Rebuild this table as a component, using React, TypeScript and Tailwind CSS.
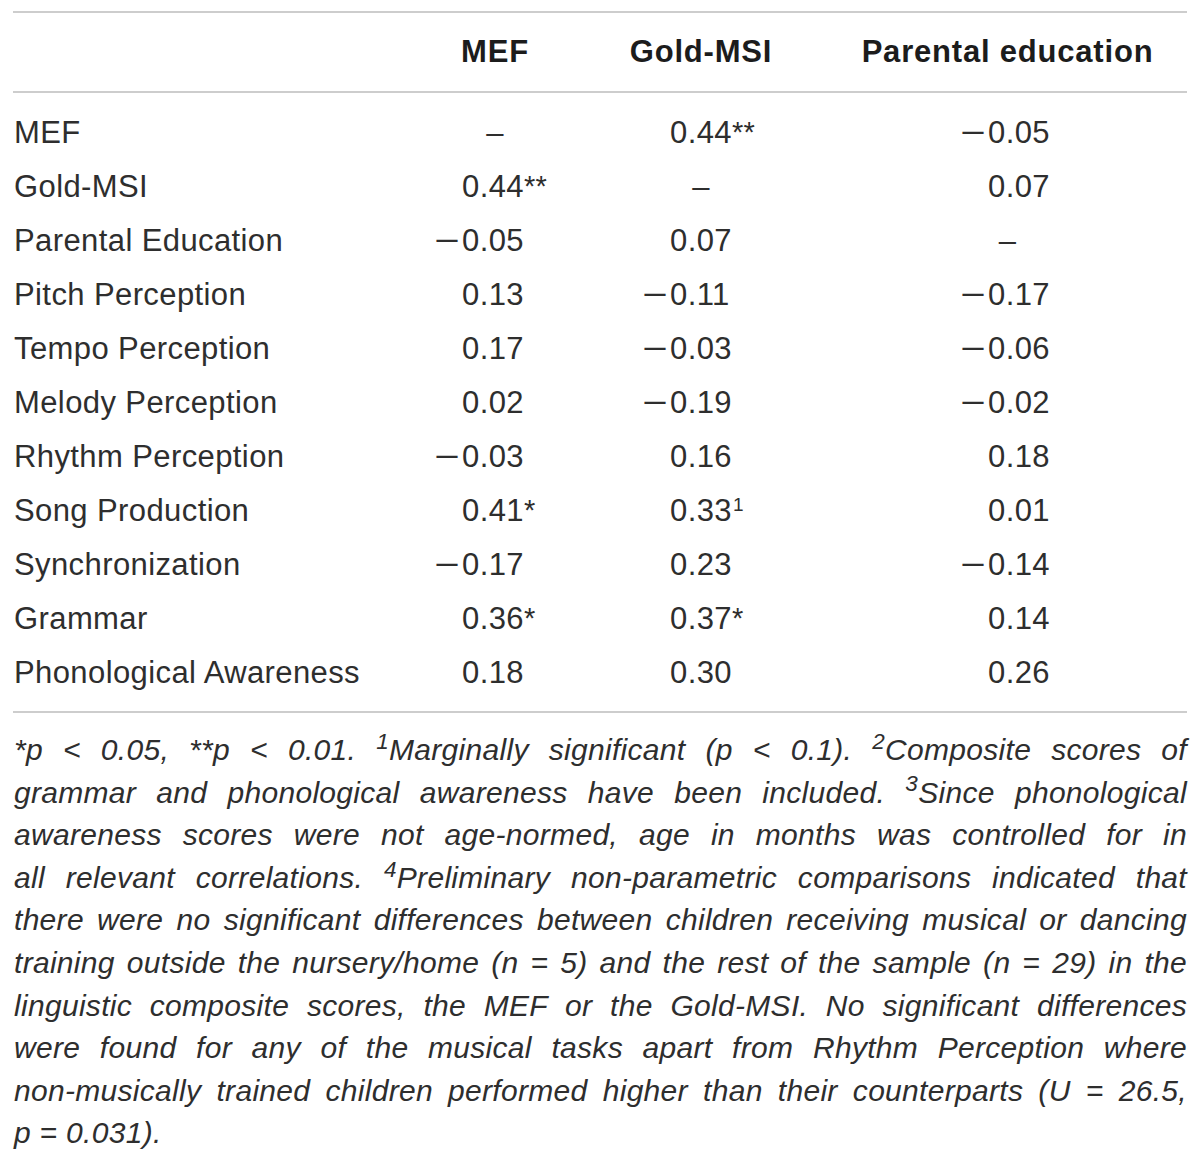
import React from "react";

type Cell = string | null; // null = diagonal dash

const rows: { label: string; v: [Cell, Cell, Cell] }[] = [
  { label: "MEF", v: [null, "0.44**", "-0.05"] },
  { label: "Gold-MSI", v: ["0.44**", null, "0.07"] },
  { label: "Parental Education", v: ["-0.05", "0.07", null] },
  { label: "Pitch Perception", v: ["0.13", "-0.11", "-0.17"] },
  { label: "Tempo Perception", v: ["0.17", "-0.03", "-0.06"] },
  { label: "Melody Perception", v: ["0.02", "-0.19", "-0.02"] },
  { label: "Rhythm Perception", v: ["-0.03", "0.16", "0.18"] },
  { label: "Song Production", v: ["0.41*", "0.33^1", "0.01"] },
  { label: "Synchronization", v: ["-0.17", "0.23", "-0.14"] },
  { label: "Grammar", v: ["0.36*", "0.37*", "0.14"] },
  { label: "Phonological Awareness", v: ["0.18", "0.30", "0.26"] },
];

// left padding for the sign slot / dash placement per column
const valuePad = ["pl-[45px]", "pl-[47px]", "pl-[159px]"];
const dashPad = ["text-center", "text-center", "text-center pl-[24px]"];

function Value({ raw }: { raw: string }) {
  const neg = raw.startsWith("-");
  let body = neg ? raw.slice(1) : raw;
  let stars = "";
  let sup = "";
  const m = body.match(/^([0-9.]+)(\**)(?:\^(\d))?$/);
  if (m) {
    body = m[1];
    stars = m[2];
    sup = m[3] || "";
  }
  return (
    <span className="flex items-baseline">
      <span className="inline-block w-[25px]">
        {neg && <span className="inline-block -ml-[3px] origin-left scale-x-[1.4]">−</span>}
      </span>
      <span>{body}</span>
      {stars && <span className="text-[29px] relative -top-[1px]">{stars}</span>}
      {sup && <sup className="text-[19px] ml-[1px]">{sup}</sup>}
    </span>
  );
}

const notes: React.ReactNode[] = [
  <>*p {"<"} 0.05, **p {"<"} 0.01. <sup>1</sup>Marginally significant (p {"<"} 0.1). <sup>2</sup>Composite scores of</>,
  <>grammar and phonological awareness have been included. <sup>3</sup>Since phonological</>,
  <>awareness scores were not age-normed, age in months was controlled for in</>,
  <>all relevant correlations. <sup>4</sup>Preliminary non-parametric comparisons indicated that</>,
  <>there were no significant differences between children receiving musical or dancing</>,
  <>training outside the nursery/home (n = 5) and the rest of the sample (n = 29) in the</>,
  <>linguistic composite scores, the MEF or the Gold-MSI. No significant differences</>,
  <>were found for any of the musical tasks apart from Rhythm Perception where</>,
  <>non-musically trained children performed higher than their counterparts (U = 26.5,</>,
];

export default function App() {
  return (
    <div className="w-[1200px] h-[1164px] bg-white px-[13px] pt-[11px] text-[#2e2e2e] font-['Liberation_Sans',Arial,sans-serif]">
      {/* header */}
      <div className="grid grid-cols-[379px_206px_206px_1fr] h-[82px] items-center border-y-2 border-[#cdcdcd] text-[31px] font-bold text-[#1c1c1c] tracking-[0.8px]">
        <div />
        <div className="text-center">MEF</div>
        <div className="text-center">Gold-MSI</div>
        <div className="text-center pl-[24px]">Parental education</div>
      </div>

      {/* body */}
      <div className="pt-[13px] pb-[11px] border-b-2 border-[#cdcdcd] text-[31px] tracking-[0.4px]">
        {rows.map((r) => (
          <div key={r.label} className="grid grid-cols-[379px_206px_206px_1fr] h-[54px] items-center">
            <div className="pl-[1px]">{r.label}</div>
            {r.v.map((c, i) =>
              c === null ? (
                <div key={i} className={dashPad[i]}>–</div>
              ) : (
                <div key={i} className={valuePad[i]}>
                  <Value raw={c} />
                </div>
              )
            )}
          </div>
        ))}
      </div>

      {/* footnote */}
      <div className="pt-[16px] pl-[1px] text-[30px] italic leading-[42.6px] tracking-[0.3px]">
        {notes.map((n, i) => (
          <div key={i} className="text-justify [text-align-last:justify]">
            {n}
          </div>
        ))}
        <div>p = 0.031).</div>
      </div>
    </div>
  );
}
